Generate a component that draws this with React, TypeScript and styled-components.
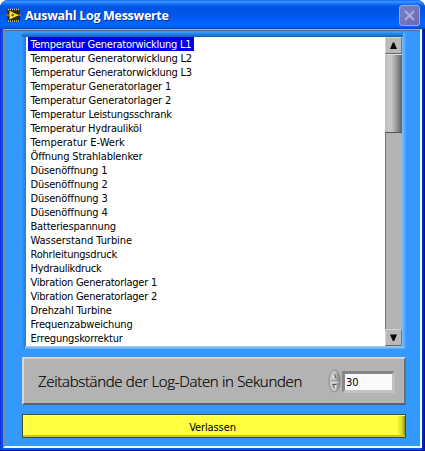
import React, { useState } from "react";
import styled, { createGlobalStyle } from "styled-components";

const GlobalStyle = createGlobalStyle`
  * { box-sizing: border-box; }
  body { margin: 0; background: #fff; overflow: hidden; }
`;

const Window = styled.div`
  width: 425px;
  height: 451px;
  padding: 0 3px 3px;
  display: flex;
  flex-direction: column;
  overflow: hidden;
  border-radius: 8px 8px 0 0;
  background: linear-gradient(90deg, #0831d9 0, #0f55e6 3px, #0f55e6 421px, #0030c8 422px, #00138c 425px);
  border-bottom: 1px solid #00138c;
  font-family: "DejaVu Sans Condensed", "DejaVu Sans", sans-serif;
  font-stretch: condensed;
  font-size: 11px;
  color: #000;
`;

const TitleBar = styled.header`
  flex: none;
  height: 29px;
  margin: 0 -3px;
  padding: 1px 5px 0 6px;
  display: flex;
  align-items: center;
  background: linear-gradient(
    180deg,
    #0058e6 0, #3a93ff 1px, #2a83fa 3px, #0560ee 5px, #0054e3 8px,
    #0055e6 14px, #0061fc 20px, #0066ff 25px, #005bf0 27px, #0040c4 29px
  );
`;

const Title = styled.h1`
  flex: 1;
  margin: 0 0 0 4px;
  padding-top: 2px;
  font: bold 12.5px/20px "Open Sans", "Noto Sans", sans-serif;
  letter-spacing: -0.3px;
  color: #fff;
  text-shadow: 1px 1px 0 #0b318f;
  white-space: nowrap;
`;

const CloseButton = styled.button`
  width: 21px;
  height: 21px;
  padding: 0;
  border: 1px solid #9babea;
  border-radius: 3px;
  background: linear-gradient(135deg, #7581ca, #7472b8 60%, #6865b4);
  svg { display: block; }
`;

const Client = styled.main`
  flex: 1;
  padding: 3px 14px 8px 17px;
  background: #3399ff;
  border-top: 1px solid #a2adc6;
  border-left: 2px solid #7488a8;
  border-right: 2px solid #f6faff;
  border-bottom: 2px solid #f6faff;
  box-shadow: inset 0 1px 0 #566f96;
`;

const ListFrame = styled.section`
  width: 384px;
  height: 316px;
  padding: 4px 4px 3px;
  display: flex;
  background:
    linear-gradient(180deg, #2b8ef2, #0f62b4) 0 0 / 381px 4px no-repeat,
    linear-gradient(0deg, #58a9f8, #a9cdf0) 3px 100% / 378px 3px no-repeat,
    linear-gradient(90deg, #3399ff, #1f7bd8) 0 0 / 4px 100% no-repeat,
    linear-gradient(90deg, #7fbcfa, #3f9fff) 100% 0 / 4px 100% no-repeat;
`;

const List = styled.ul`
  flex: 1;
  margin: 0;
  padding: 0 0 0 2px;
  list-style: none;
  background: #fff;
`;

const Row = styled.li<{ $selected: boolean; $tracking: number }>`
  width: max-content;
  height: 14px;
  padding: 0 3px 0 2.5px;
  line-height: 15.5px;
  letter-spacing: ${(p) => p.$tracking}px;
  white-space: nowrap;
  color: ${(p) => (p.$selected ? "#fff" : "#000")};
  background: ${(p) => (p.$selected ? "#0000e8" : "transparent")};
`;

const ScrollBar = styled.div`
  width: 17px;
  display: flex;
  flex-direction: column;
  background: #b3b3b3;
  border-left: 1px solid #777;
`;

const ScrollButton = styled.button`
  height: 17px;
  margin: 0 0 0 -1px;
  padding: 0;
  border: 1px solid;
  border-color: #d4d4d4 #777 #666 #d4d4d4;
  background: #b9b9b9;
  svg { display: block; margin: auto; }
`;

const Thumb = styled.div`
  height: 79px;
  margin-left: -1px;
  border-top: 1px solid #ddd;
  border-bottom: 1px solid #555;
  background: linear-gradient(90deg, #bdbdbd, #cacaca 35%, #a5a5a5 60%, #5f5f5f);
`;

const Track = styled.div`
  flex: 1;
`;

const IntervalPanel = styled.section`
  width: 384px;
  height: 48px;
  margin-top: 8px;
  padding: 0 9px 0 14px;
  display: flex;
  align-items: center;
  background: #b3b3b3;
  border: solid;
  border-width: 2px;
  border-color: #d6d6d6 #68717a #59626c #d6d6d6;
`;

const IntervalLabel = styled.label`
  flex: 1;
  font-family: "Open Sans", "Noto Sans", sans-serif;
  font-stretch: normal;
  font-size: 15px;
  font-weight: 300;
  line-height: 20px;
  letter-spacing: -0.32px;
  white-space: nowrap;
  -webkit-text-stroke: 0.2px #000;
`;

const NumberField = styled.input`
  width: 53px;
  height: 22px;
  margin-top: 1px;
  padding: 1px 0 0 1px;
  border: solid;
  border-width: 3px;
  border-color: #858585 #c0c0c0 #c3c3c3 #888;
  outline: none;
  background: #fafafa;
  font: inherit;
`;

const LeaveButton = styled.button`
  width: 384px;
  height: 24px;
  margin-top: 9px;
  padding: 2px 3px 0 0;
  display: block;
  border: 1px solid #45531e;
  background: linear-gradient(90deg, #ffff68 0, #ffff40 4px, #ffff40 374px, #d8d82b 379px, #8c8c14 382px);
  box-shadow: inset 0 1px 0 #ffff80, inset 0 -2px 0 #c5c52b;
  font: inherit;
  letter-spacing: -0.1px;
  color: #000;
`;

const channels = [
  { name: "Temperatur Generatorwicklung L1", tracking: -0.25 },
  { name: "Temperatur Generatorwicklung L2", tracking: -0.23 },
  { name: "Temperatur Generatorwicklung L3", tracking: -0.23 },
  { name: "Temperatur Generatorlager 1", tracking: -0.15 },
  { name: "Temperatur Generatorlager 2", tracking: -0.15 },
  { name: "Temperatur Leistungsschrank", tracking: -0.17 },
  { name: "Temperatur Hydrauliköl", tracking: -0.2 },
  { name: "Temperatur E-Werk", tracking: 0 },
  { name: "Öffnung Strahlablenker", tracking: -0.15 },
  { name: "Düsenöffnung 1", tracking: -0.15 },
  { name: "Düsenöffnung 2", tracking: -0.13 },
  { name: "Düsenöffnung 3", tracking: -0.13 },
  { name: "Düsenöffnung 4", tracking: -0.13 },
  { name: "Batteriespannung", tracking: -0.2 },
  { name: "Wasserstand Turbine", tracking: -0.05 },
  { name: "Rohrleitungsdruck", tracking: -0.2 },
  { name: "Hydraulikdruck", tracking: -0.3 },
  { name: "Vibration Generatorlager 1", tracking: -0.24 },
  { name: "Vibration Generatorlager 2", tracking: -0.24 },
  { name: "Drehzahl Turbine", tracking: -0.13 },
  { name: "Frequenzabweichung", tracking: -0.15 },
  { name: "Erregungskorrektur", tracking: -0.18 },
];

const AppIcon = () => (
  <svg width="15" height="15" viewBox="0 0 15 15">
    <rect x="1.5" y="1" width="12.5" height="12.5" fill="#302c12" />
    <path d="M2 1.5H14M2 13H14" stroke="#dbc96a" strokeWidth="1.4" strokeDasharray="1 1" />
    <path d="M0 7H4" stroke="#df4820" strokeWidth="1.5" />
    <path d="M11 7H15" stroke="#d55a35" strokeWidth="1.5" />
    <path d="M3.5 2.8L12.5 7.2L3.5 11.6Z" fill="#fff23c" />
    <path d="M5 7H8.5M6.8 5.5V8.5" stroke="#4c5a12" />
  </svg>
);

const Arrow = ({ down = false }: { down?: boolean }) => (
  <svg width="9" height="9" viewBox="0 0 9 9">
    <path d={down ? "M1 1.5H8L5.2 8H3.8Z" : "M1 8H8L5.2 1.5H3.8Z"} fill="#080808" />
  </svg>
);

const Spinner = () => (
  <svg width="14" height="24" viewBox="0 0 14 24">
    <defs>
      <linearGradient id="knob">
        <stop offset="0" stopColor="#c8c8c8" />
        <stop offset=".55" stopColor="#c4c4c4" />
        <stop offset="1" stopColor="#777" />
      </linearGradient>
    </defs>
    <ellipse cx="6.5" cy="12" rx="5.5" ry="11" fill="url(#knob)" stroke="#8a8a8a" />
    <path d="M2.5 12H10.5" stroke="#777" />
    <path d="M2.5 13H10.5" stroke="#ececec" />
    <path d="M4.5 9L6.5 5.5" fill="none" stroke="#eee" />
    <path d="M6.5 5L8 9M4.5 15.5H8.5M5 16L6.5 19" fill="none" stroke="#555" />
    <path d="M7 19L8.5 16" stroke="#eee" />
  </svg>
);

export default function App() {
  const [selected, setSelected] = useState(0);
  return (
    <>
      <GlobalStyle />
      <Window>
        <TitleBar>
          <AppIcon />
          <Title>Auswahl Log Messwerte</Title>
          <CloseButton aria-label="Schließen">
            <svg width="19" height="19" viewBox="0 0 19 19">
              <path d="M5 5L14 14M14 5L5 14" stroke="#a9afe2" strokeWidth="2" />
            </svg>
          </CloseButton>
        </TitleBar>
        <Client>
          <ListFrame>
            <List>
              {channels.map(({ name, tracking }, i) => (
                <Row
                  key={name}
                  $selected={i === selected}
                  $tracking={tracking}
                  onClick={() => setSelected(i)}
                >
                  {name}
                </Row>
              ))}
            </List>
            <ScrollBar>
              <ScrollButton aria-label="Nach oben"><Arrow /></ScrollButton>
              <Thumb />
              <Track />
              <ScrollButton aria-label="Nach unten"><Arrow down /></ScrollButton>
            </ScrollBar>
          </ListFrame>
          <IntervalPanel>
            <IntervalLabel htmlFor="interval">Zeitabstände der Log-Daten in Sekunden</IntervalLabel>
            <Spinner />
            <NumberField id="interval" defaultValue="30" />
          </IntervalPanel>
          <LeaveButton>Verlassen</LeaveButton>
        </Client>
      </Window>
    </>
  );
}
